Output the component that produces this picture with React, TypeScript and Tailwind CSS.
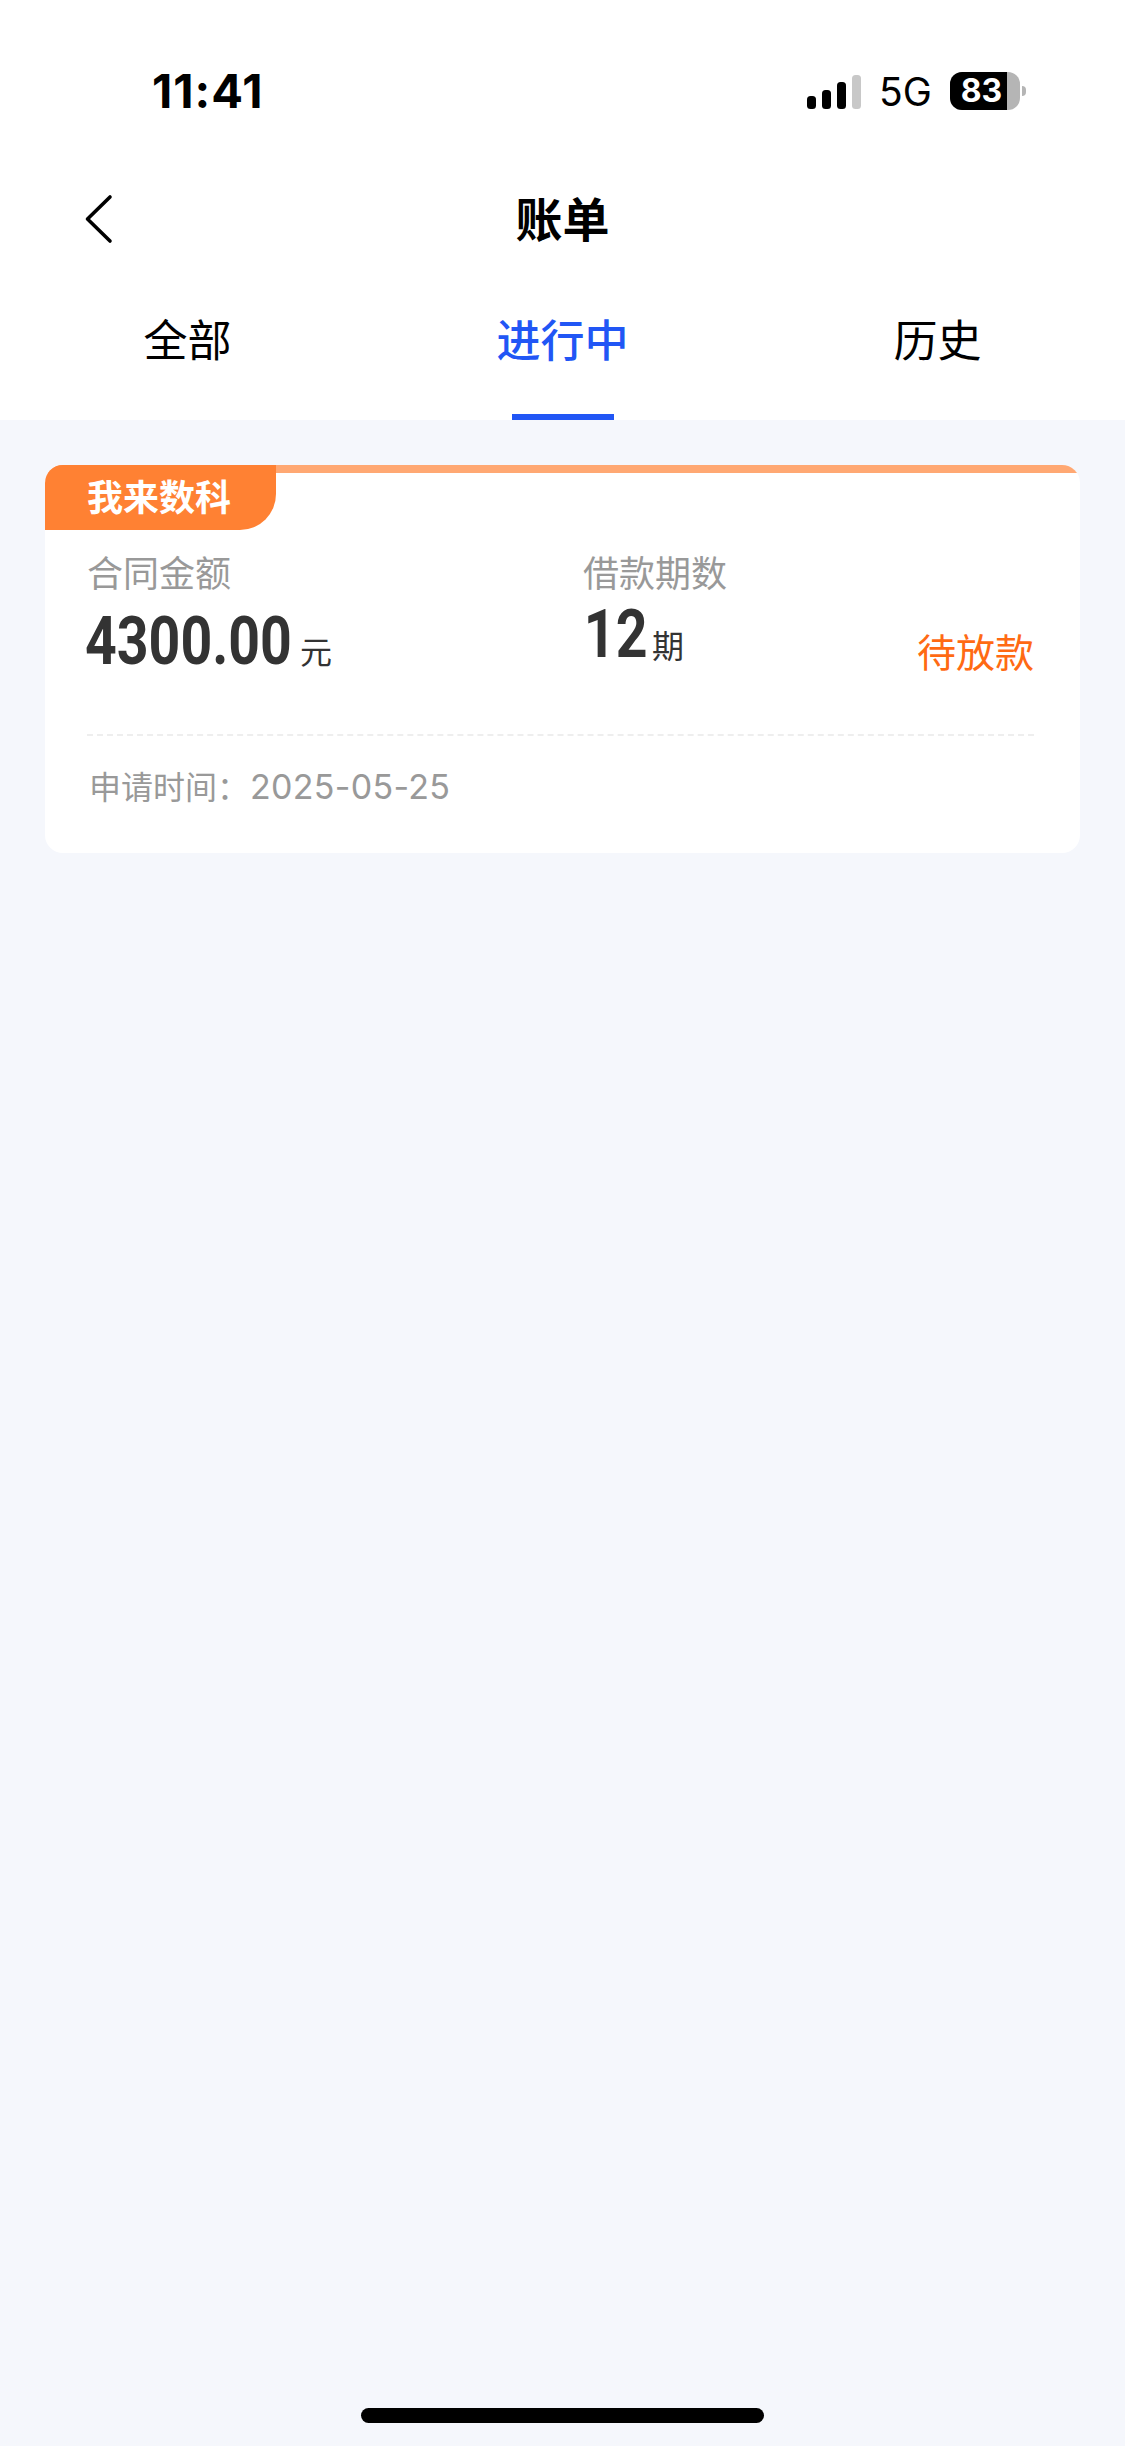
const cjk = "font-['Noto_Sans_CJK_SC','Noto_Sans',sans-serif]";
const din = "font-['Roboto',sans-serif] font-bold text-[66px] leading-[60px] whitespace-nowrap origin-left scale-x-[.84]";

function StatusBar() {
  return (
    <div className="h-[150px] pt-[72px] pl-[152px] pr-[99px] flex justify-between items-start">
      <span className="font-['Inter',sans-serif] font-bold text-[47px] leading-[38px] text-black tracking-[1px]">11:41</span>
      <div className="flex items-center h-[38px]">
        <svg width="54" height="34" viewBox="0 0 54 34" className="mt-[2px]">
          <rect x="0" y="21" width="9" height="13" rx="3.5" fill="#000" />
          <rect x="15" y="15" width="9" height="19" rx="3.5" fill="#000" />
          <rect x="30" y="7" width="9" height="27" rx="3.5" fill="#000" />
          <rect x="45" y="0" width="9" height="34" rx="3.5" fill="#c8c8c8" />
        </svg>
        <span className="ml-[18px] font-['Inter',sans-serif] text-[39px] leading-none text-black w-[53px]">5G</span>
        <div className="ml-[18px] w-[70px] h-[38px] rounded-[12px] overflow-hidden flex bg-[#b5b5b5]">
          <div className="w-[57px] bg-black text-white font-['Inter',sans-serif] font-bold text-[32px] leading-[38px] text-center pl-[6px]">83</div>
        </div>
        <div className="ml-[2px] w-[4px] h-[10px] rounded-r-full bg-[#b5b5b5]" />
      </div>
    </div>
  );
}

function NavBar() {
  return (
    <div className={`grid grid-cols-3 items-center h-[138px] ${cjk}`}>
      <svg width="30" height="50" viewBox="0 0 30 50" fill="none" className="ml-[84px]">
        <path d="M26 3 L3.5 25 L26 47" stroke="#000" strokeWidth="3.6" strokeLinecap="round" strokeLinejoin="round" />
      </svg>
      <span className="text-center text-[47px] font-bold text-black leading-[50px] pb-[5px]">账单</span>
    </div>
  );
}

function Tabs() {
  return (
    <div className={`grid grid-cols-3 h-[132px] ${cjk}`}>
      <div className="text-center text-[44px] leading-[44px] text-black pt-[28px]">全部</div>
      <div className="flex flex-col items-center justify-between">
        <span className="text-[44px] leading-[44px] font-medium text-[#2156f5] pt-[28px]">进行中</span>
        <div className="w-[102px] h-[6px] bg-[#2156f5]" />
      </div>
      <div className="text-center text-[44px] leading-[44px] text-black pt-[28px]">历史</div>
    </div>
  );
}

function BillCard() {
  return (
    <div className={`bg-white rounded-[18px] overflow-hidden ${cjk}`}>
      <div className="h-[65px] border-t-[8px] border-[#ffa873] relative">
        <div className="absolute -top-[8px] left-0 w-[231px] h-[65px] bg-[#ff8133] rounded-br-[36px] pl-[42px] text-white text-[36px] font-bold leading-[61px]">
          我来数科
        </div>
      </div>
      <div className="pl-[42px] pr-[46px]">
        <div className="flex h-[206px] border-b-2 border-dashed border-[#eeeeee] pt-[19px] text-[36px] leading-[44px] text-[#999999]">
          <div className="w-[496px]">
            <div>合同金额</div>
            <div className="flex items-end mt-[19px]">
              <span className={`${din} w-[208px] -ml-[2px]`}>
                <span className="text-[#333333]">4300.00</span>
              </span>
              <span className="ml-[7px] mb-[2px] text-[32px] leading-[40px] text-[#333333]">元</span>
            </div>
          </div>
          <div className="flex-1">
            <div>借款期数</div>
            <div className="flex items-end mt-[12px]">
              <span className={`${din} w-[62px] pl-[1px]`}>
                <span className="text-[#333333]">12</span>
              </span>
              <span className="ml-[7px] mb-[1px] text-[32px] leading-[40px] text-[#333333]">期</span>
            </div>
          </div>
          <div className="text-[39px] leading-[44px] text-[#ff6a13] pt-[79px]">待放款</div>
        </div>
        <div className="pt-[29px] pb-[46px] pl-[2px] text-[32px] leading-[40px] text-[#999999]">
          申请时间：<span className="ml-[1px] font-['Inter',sans-serif] text-[34px] tracking-[0.3px]">2025-05-25</span>
        </div>
      </div>
    </div>
  );
}

export default function App() {
  return (
    <div className="min-h-[2446px] flex flex-col bg-[#f5f7fc]">
      <div className="bg-white">
        <StatusBar />
        <NavBar />
        <Tabs />
      </div>
      <div className="flex-1 flex flex-col px-[45px] pt-[45px]">
        <BillCard />
      </div>
      <div className="flex justify-center pb-[23px]">
        <div className="w-[403px] h-[15px] rounded-full bg-black" />
      </div>
    </div>
  );
}
